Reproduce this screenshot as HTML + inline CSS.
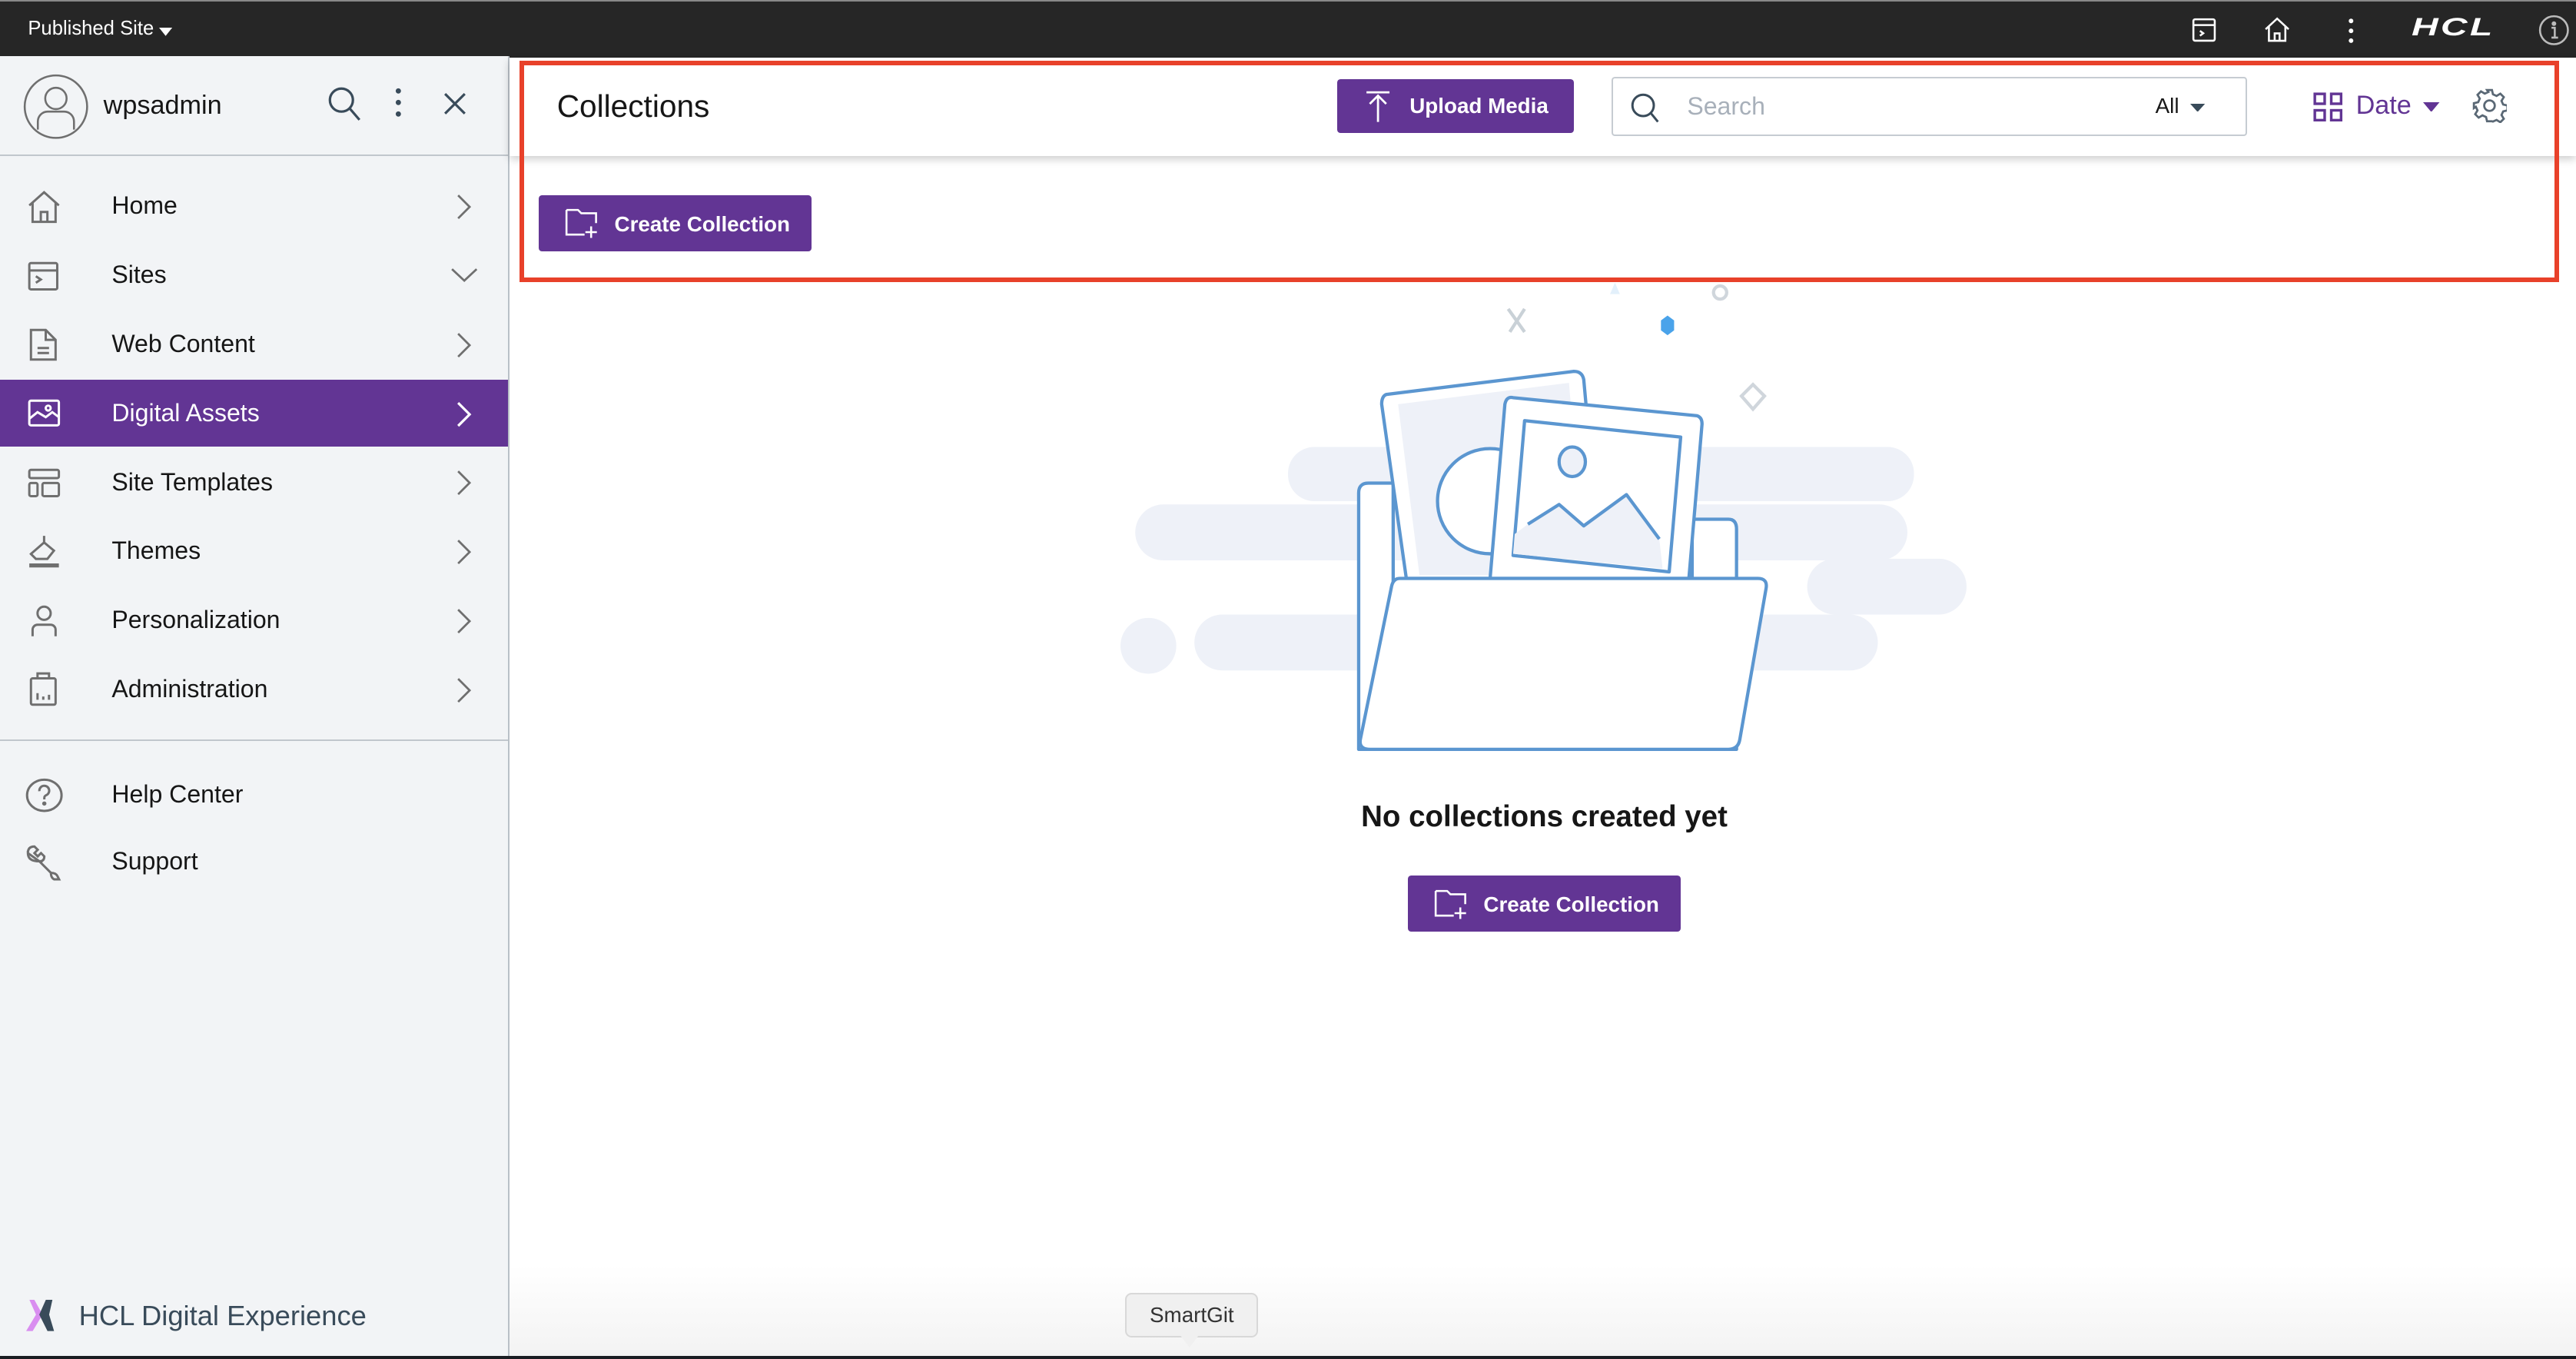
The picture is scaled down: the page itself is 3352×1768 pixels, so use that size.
<!DOCTYPE html>
<html><head><meta charset="utf-8">
<style>
html,body{margin:0;padding:0;width:3352px;height:1768px;overflow:hidden;background:#fff}
#w{zoom:2.1378;width:1568px;height:827px;position:relative;font-family:"Liberation Sans",sans-serif;color:#161616}
.a{position:absolute}
.top{left:0;top:0;width:1568px;height:34px;background:#262626;border-top:1px solid #888}
.side{left:0;top:34px;width:309px;height:793px;background:#f2f4f6;border-right:1px solid #b9c0c7}
.item{position:absolute;left:0;width:309px;height:41px;font-size:15px;line-height:41px}
.item span{position:absolute;left:68px}
.item svg{position:absolute}
.btn{background:#623594;color:#fff;font-size:13px;font-weight:bold;border-radius:2px}
</style></head><body><div id="w">
<div class="a top">
 <div class="a" style="left:17px;top:10px;color:#fff;font-size:12px">Published Site</div>
 <svg class="a" style="left:97px;top:16px" width="8" height="5"><path d="M0 0H8L4 5Z" fill="#fff"/></svg>
 <svg class="a" style="left:1334px;top:10px" width="15" height="15" fill="none" stroke="#fff" stroke-width="1.2"><rect x="1" y="1" width="13" height="13" rx="1"/><path d="M1 4.5H14M5 8l2 1.5-2 1.5"/></svg>
 <svg class="a" style="left:1378px;top:9px" width="16" height="16" fill="none" stroke="#fff" stroke-width="1.2"><path d="M1 8L8 1.5 15 8M3 6.5V15H13V6.5M6.5 15V10.5H9.5V15"/></svg>
 <svg class="a" style="left:1429px;top:10px" width="4" height="16" fill="#fff"><circle cx="2" cy="2" r="1.4"/><circle cx="2" cy="8" r="1.4"/><circle cx="2" cy="14" r="1.4"/></svg>
 <div class="a" style="left:1468px;top:7px;color:#fff;font-size:15px;font-weight:bold;font-style:italic;letter-spacing:1px;transform:scaleX(1.5);transform-origin:left">HCL</div>
 <svg class="a" style="left:1545px;top:8px" width="19" height="19" fill="none" stroke="#bbb" stroke-width="1.2"><circle cx="9.5" cy="9.5" r="8.5"/><path d="M8 8h2v6M8 14h4"/><circle cx="9.5" cy="5.5" r=".8" fill="#bbb"/></svg>
</div>
<div class="a side">
 <svg class="a" style="left:14px;top:11px" width="40" height="40" fill="none" stroke="#6f6f6f" stroke-width="1.2"><ellipse cx="20" cy="20" rx="19" ry="19"/><circle cx="20" cy="15" r="6.5"/><path d="M9 34V29a6 6 0 0 1 6-6h10a6 6 0 0 1 6 6v5"/></svg>
 <div class="a" style="left:63px;top:21px;font-size:16px">wpsadmin</div>
 <svg class="a" style="left:199px;top:18px" width="22" height="22" fill="none" stroke="#394b5a" stroke-width="1.5"><circle cx="9" cy="9" r="7"/><path d="M14 14l6 7"/></svg>
 <svg class="a" style="left:240px;top:19px" width="5" height="20" fill="#394b5a"><circle cx="2.5" cy="2.5" r="1.6"/><circle cx="2.5" cy="9.5" r="1.6"/><circle cx="2.5" cy="16.5" r="1.6"/></svg>
 <svg class="a" style="left:270px;top:22px" width="14" height="14" stroke="#394b5a" stroke-width="1.5"><path d="M1 1L13 13M13 1L1 13"/></svg>
 <div class="a" style="left:0;top:60px;width:309px;height:1px;background:#c1c7cd"></div>
 <div class="item" style="top:71px"><svg style="left:17px;top:11px" width="20" height="20" fill="none" stroke="#6f6f6f" stroke-width="1.4"><path d="M1 9L10 1 19 9M3 7.5V19H17V7.5M8 19V13H12V19"/></svg><span>Home</span><svg style="left:278px;top:13px" width="10" height="16" fill="none" stroke="#6f6f6f" stroke-width="1.3"><path d="M1 1L8 8 1 15"/></svg></div>
 <div class="item" style="top:113px"><svg style="left:17px;top:11px" width="20" height="20" fill="none" stroke="#6f6f6f" stroke-width="1.4"><rect x="1" y="2" width="17" height="16" rx="1"/><path d="M1 6.5H18M5 10l3 2-3 2"/></svg><span>Sites</span><svg style="left:274px;top:16px" width="17" height="10" fill="none" stroke="#6f6f6f" stroke-width="1.3"><path d="M1 1L8.5 8 16 1"/></svg></div>
 <div class="item" style="top:155px"><svg style="left:17px;top:10px" width="20" height="22" fill="none" stroke="#6f6f6f" stroke-width="1.4"><path d="M2 2H11L17 8V20H2ZM11 2V8H17M6 13H13M6 16H13"/></svg><span>Web Content</span><svg style="left:278px;top:13px" width="10" height="16" fill="none" stroke="#6f6f6f" stroke-width="1.3"><path d="M1 1L8 8 1 15"/></svg></div>
 <div class="item" style="top:197px;background:#623594;color:#fff"><svg style="left:17px;top:11px" width="20" height="20" fill="none" stroke="#fff" stroke-width="1.4"><rect x="1" y="2" width="18" height="15" rx="1"/><path d="M1 13L6 9 11 12 15 9 19 12"/><circle cx="12.5" cy="6.5" r="1.5"/></svg><span>Digital Assets</span><svg style="left:278px;top:13px" width="10" height="16" fill="none" stroke="#fff" stroke-width="1.5"><path d="M1 1L8 8 1 15"/></svg></div>
 <div class="item" style="top:239px"><svg style="left:17px;top:11px" width="20" height="20" fill="none" stroke="#6f6f6f" stroke-width="1.4"><rect x="1" y="2" width="18" height="5" rx="1"/><rect x="1" y="10" width="5" height="8" rx="1"/><rect x="9" y="10" width="10" height="8" rx="1"/></svg><span>Site Templates</span><svg style="left:278px;top:13px" width="10" height="16" fill="none" stroke="#6f6f6f" stroke-width="1.3"><path d="M1 1L8 8 1 15"/></svg></div>
 <div class="item" style="top:281px"><svg style="left:17px;top:10px" width="20" height="22" fill="none" stroke="#6f6f6f" stroke-width="1.4"><path d="M2 12L10 5 16 10 12 15H5ZM10 1V6"/><path d="M1 19H19" stroke-width="2.5"/></svg><span>Themes</span><svg style="left:278px;top:13px" width="10" height="16" fill="none" stroke="#6f6f6f" stroke-width="1.3"><path d="M1 1L8 8 1 15"/></svg></div>
 <div class="item" style="top:323px"><svg style="left:17px;top:10px" width="20" height="22" fill="none" stroke="#6f6f6f" stroke-width="1.4"><circle cx="10" cy="6" r="4"/><path d="M3 20V16a3 3 0 0 1 3-3h8a3 3 0 0 1 3 3v4"/></svg><span>Personalization</span><svg style="left:278px;top:13px" width="10" height="16" fill="none" stroke="#6f6f6f" stroke-width="1.3"><path d="M1 1L8 8 1 15"/></svg></div>
 <div class="item" style="top:365px"><svg style="left:17px;top:10px" width="20" height="22" fill="none" stroke="#6f6f6f" stroke-width="1.4"><rect x="2" y="4" width="15" height="16" rx="1"/><path d="M6 4V1H13V4M6 17V13M9.5 17V15M13 17V14"/></svg><span>Administration</span><svg style="left:278px;top:13px" width="10" height="16" fill="none" stroke="#6f6f6f" stroke-width="1.3"><path d="M1 1L8 8 1 15"/></svg></div>
 <div class="a" style="left:0;top:416px;width:309px;height:1px;background:#c1c7cd"></div>
 <div class="item" style="top:429px"><svg style="left:15px;top:9px" width="24" height="24" fill="none" stroke="#6f6f6f" stroke-width="1.4"><ellipse cx="12" cy="12" rx="10.5" ry="9.5"/><path d="M9 9.5a3 3 0 1 1 4 2.5c-1 .5-1 1-1 2.5"/><circle cx="12" cy="17" r=".6" fill="#6f6f6f"/></svg><span>Help Center</span></div>
 <div class="item" style="top:470px"><svg style="left:15px;top:9px" width="24" height="24" fill="none" stroke="#6f6f6f" stroke-width="1.4"><path d="M2 6Q2 2 6 2L8 4 6 6 8 8 10 6 12 8Q12 11 9 11L16 18Q19 18 20 20L21 22 18 22Q16 21 16 18M9 11Q2 11 2 6Z"/></svg><span>Support</span></div>
 <svg class="a" style="left:16px;top:757px" width="28" height="20"><path d="M0 19L6 9 2 0H5L10 9 4 19Z" fill="#d98ef0"/><path d="M8 9L12 0H16L14 9 17 19H13Z" fill="#394b5a"/></svg>
 <div class="a" style="left:48px;top:757px;font-size:17px;color:#394b5a">HCL Digital Experience</div>
</div>
<div class="a" style="left:310px;top:35px;width:1258px;height:60px;background:#fff;box-shadow:0 2px 5px rgba(0,0,0,.2)"></div>
<div class="a" style="left:339px;top:54px;font-size:19px;font-weight:500">Collections</div>
<div class="a btn" style="left:814px;top:48px;width:144px;height:33px"><svg class="a" style="left:17px;top:7px" width="16" height="20" fill="none" stroke="#fff" stroke-width="1.3"><path d="M1 1H15M8 19V3M3 8L8 3 13 8"/></svg><span class="a" style="left:44px;top:9px">Upload Media</span></div>
<div class="a" style="left:981px;top:47px;width:385px;height:34px;border:1px solid #c6ccd2;border-radius:2px;background:#fff">
 <svg class="a" style="left:10px;top:8px" width="18" height="19" fill="none" stroke="#394b5a" stroke-width="1.4"><circle cx="8" cy="8" r="6.5"/><path d="M12.5 12.5L17 18"/></svg>
 <div class="a" style="left:45px;top:8px;font-size:15px;color:#a8b0ba">Search</div>
 <div class="a" style="left:330px;top:9px;font-size:13px">All</div>
 <svg class="a" style="left:351px;top:15px" width="9" height="5"><path d="M0 0H9L4.5 5Z" fill="#394b5a"/></svg>
</div>
<svg class="a" style="left:1408px;top:56px" width="18" height="18" fill="none" stroke="#623594" stroke-width="1.6"><rect x="1" y="1" width="6" height="6"/><rect x="11" y="1" width="6" height="6"/><rect x="1" y="11" width="6" height="6"/><rect x="11" y="11" width="6" height="6"/></svg>
<div class="a" style="left:1434px;top:55px;font-size:16px;color:#623594">Date</div>
<svg class="a" style="left:1475px;top:62px" width="10" height="6"><path d="M0 0H10L5 6Z" fill="#623594"/></svg>
<svg class="a" style="left:1505px;top:54px" width="21" height="21" fill="none" stroke="#5a6875" stroke-width="1.3"><circle cx="10.5" cy="10.5" r="3.2"/><path d="M9 1h3l.6 2.6 2.2 1 2.3-1.4 2.1 2.1-1.4 2.3 1 2.2 2.6.6v3l-2.6.6-1 2.2 1.4 2.3-2.1 2.1-2.3-1.4-2.2 1L12 20H9l-.6-2.6-2.2-1-2.3 1.4-2.1-2.1 1.4-2.3-1-2.2L1 12V9l2.6-.6 1-2.2-1.4-2.3 2.1-2.1 2.3 1.4 2.2-1Z"/></svg>
<div class="a btn" style="left:328px;top:119px;width:166px;height:34px"><svg class="a" style="left:16px;top:8px" width="22" height="19" fill="none" stroke="#fff" stroke-width="1.2"><path d="M1 1H8L10 3H19V9M12 16H1V1M16 11V18M12.5 14.5H19.5"/></svg><span class="a" style="left:46px;top:10px">Create Collection</span></div>
<div class="a" style="left:316px;top:37px;width:1236px;height:129px;border:3px solid #e8412a"></div>
<svg class="a" style="left:0;top:0" width="1568" height="827">
 <g fill="#eef1f8">
  <rect x="784" y="272" width="381" height="33" rx="16"/>
  <rect x="691" y="307" width="470" height="34" rx="17"/>
  <rect x="1100" y="340" width="97" height="34" rx="17"/>
  <rect x="727" y="374" width="416" height="34" rx="17"/>
  <circle cx="699" cy="393" r="17"/>
 </g>
 <g fill="none" stroke-width="2">
  <path d="M918 188l10 14M928 188l-9 14" stroke="#c9d1d7"/>
  <circle cx="1047" cy="178" r="4" stroke="#d0d6dc"/>
  <path d="M1067 234l7 7-7 8-7-8Z" stroke="#d0d6dc"/>
 </g>
 <path d="M983 172l3 7h-6Z" fill="#e3f0fb"/>
 <path d="M1015 192l4 3v6l-4 3-4-3v-6Z" fill="#4aa3ea"/>
 <g stroke="#5b96d0" stroke-width="2" stroke-linejoin="round" fill="#fff">
  <path d="M827 456V300q0-6 6-6h15V456Z"/>
  <path d="M1030 316h22q5 0 5 6V456H1030Z"/>
  <path d="M844 240L958 226q5 0 6 5L975 352H856L841 246q0-5 3-6Z"/>
  <path d="M851 246L955 233 965 350H864Z" fill="#eef1f8" stroke="none"/>
  <circle cx="907" cy="305" r="32" fill="#fff"/>
  <path d="M921 242L1033 253q3 1 3 5L1028 352H907L916 246q1-5 5-4Z"/>
  <path d="M928 256L1023 266 1016 348 921 338Z"/>
  <path d="M922 325L930 319 949 307 964 320 990 301 1010 328 1012 346 921 337Z" fill="#eef1f8" stroke="none"/>
  <path d="M930 319L949 307 964 320 990 301 1010 328" fill="none"/>
  <ellipse cx="957" cy="281" rx="8" ry="9" fill="#eef1f8"/>
  <path d="M852 352H1070q6 0 5 6L1059 450q-1 6-7 6H834q-7 0-6-6L847 357q1-5 5-5Z"/>
 </g>
</svg>
<div class="a" style="left:700px;top:487px;width:480px;text-align:center;font-size:18px;font-weight:bold">No collections created yet</div>
<div class="a btn" style="left:857px;top:533px;width:166px;height:34px"><svg class="a" style="left:16px;top:8px" width="22" height="19" fill="none" stroke="#fff" stroke-width="1.2"><path d="M1 1H8L10 3H19V9M12 16H1V1M16 11V18M12.5 14.5H19.5"/></svg><span class="a" style="left:46px;top:10px">Create Collection</span></div>
<div class="a" style="left:310px;top:770px;width:1258px;height:55px;background:linear-gradient(#fff,#f3f3f3)"></div>
<div class="a" style="left:685px;top:787px;width:79px;height:25px;background:#f0f0f0;border:1px solid #d8d8d8;border-radius:4px;font-size:13px;color:#333;text-align:center;line-height:25px">SmartGit</div>
<svg class="a" style="left:718px;top:812px" width="12" height="8"><path d="M0 0H12L6 8Z" fill="#f0f0f0"/></svg>
<div class="a" style="left:0;top:825px;width:1568px;height:2px;background:#1a1d22"></div>
</div></body></html>
